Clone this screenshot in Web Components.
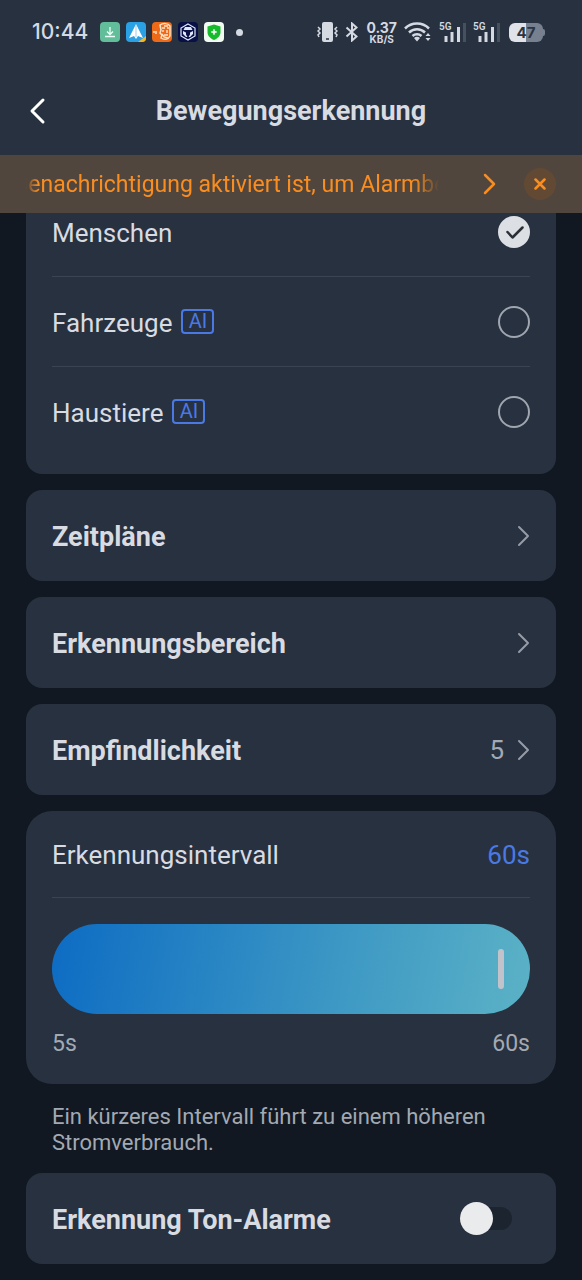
<!DOCTYPE html>
<html lang="de">
<head>
<meta charset="utf-8">
<meta name="viewport" content="width=device-width, initial-scale=1">
<title>Bewegungserkennung</title>
<style>
  html { background: #111822; }
  body { margin: 0; background: #111822; color: #d8dbe1; font-family: Roboto, "Liberation Sans", sans-serif; font-size: 26px; line-height: 32px;
    --card: #273140; --line: #3a4452; --muted: #a3a9b2; --blue: #4b79e4; --orange: #f98d20; }
  header { position: relative; z-index: 1; }
  main { display: flex; flex-direction: column; gap: 16px; padding: 0 26px 16px; margin-top: -26px; }
</style>
</head>
<body>
<header>
  <status-bar></status-bar>
  <title-bar>Bewegungserkennung</title-bar>
  <alert-banner>Benachrichtigung aktiviert ist, um Alarmbenachrichtigungen zu erhalten</alert-banner>
</header>
<main>
  <option-card>
    <check-row checked>Menschen</check-row>
    <check-row ai>Fahrzeuge</check-row>
    <check-row ai>Haustiere</check-row>
  </option-card>
  <link-card>Zeitpläne</link-card>
  <link-card>Erkennungsbereich</link-card>
  <link-card value="5">Empfindlichkeit</link-card>
  <interval-card>Erkennungsintervall</interval-card>
  <hint-text>Ein kürzeres Intervall führt zu einem höheren Stromverbrauch.</hint-text>
  <toggle-card>Erkennung Ton-Alarme</toggle-card>
</main>
<script>
const define = (name, html, setup) => customElements.define(name, class extends HTMLElement {
  constructor() {
    super();
    this.attachShadow({ mode: 'open' }).innerHTML = '<style>*{box-sizing:border-box}button,input{font:inherit;margin:0}button{border:0;padding:0;background:none;color:inherit;display:grid;place-items:center}svg{display:block;flex:none}</style>' + html;
  }
  connectedCallback() { if (setup) setup(this, this.shadowRoot); }
});

define('status-bar', `
<style>
  :host { display: flex; justify-content: space-between; align-items: center; height: 64px; padding: 0 37px 0 32px; background: var(--card); color: #d5d9e2; }
  .left, .right { display: flex; align-items: center; }
  .left { gap: 6px; }
  .right { gap: 7px; }
  time { font: 500 21px/24px Inter, sans-serif; margin-right: 6px; }
  .dot { width: 7px; height: 7px; border-radius: 50%; background: #d5d9e2; margin-left: 6px; }
  .rate { display: grid; justify-items: center; font: 700 14px/13px Inter, sans-serif; }
  .rate small { font-size: 10px; line-height: 10px; }
  .cell { display: grid; grid-template-columns: 13px 14px; align-items: start; }
  .cell span { font: 600 10px/10px Roboto, sans-serif; grid-area: 1/1; }
  .cell svg { grid-area: 1/1/2/3; }
  .battery { display: grid; place-items: center; position: relative; width: 34px; height: 19px; border-radius: 6px; background: linear-gradient(90deg, #dfe2e8 50%, #77808e 50%); font: 700 15px/19px Inter, sans-serif; color: #2b3442; margin: 0 2px; }
  .battery::after { content: ""; position: absolute; left: 100%; top: 6px; width: 2px; height: 7px; border-radius: 0 2px 2px 0; background: #77808e; }
</style>
<div class="left">
  <time>10:44</time>
  <svg width="20" height="20" viewBox="0 0 20 20"><rect width="20" height="20" rx="4" fill="#62bd9a"/><path d="M10 5v7M7 9.500l3 3 3-3M5 14.500h10" fill="none" stroke="#edfff8" stroke-width="1.300"/></svg>
  <svg width="20" height="20" viewBox="0 0 20 20"><rect width="20" height="20" rx="4" fill="#2ba1e5"/><path d="M12 20l8-6v2a4 4 0 0 1-4 4z" fill="#f3b52a"/><path d="M10 2L3 16l5-2 2 3 2-3 5 2z" fill="#fff"/><path d="M10 3v12" stroke="#9fcde9"/></svg>
  <svg width="20" height="20" viewBox="0 0 20 20"><rect width="20" height="20" rx="4" fill="#ee6a16"/><path d="M1 10h2m1-1v3M8 3c3-2 8-2 10 1v10c-2 4-6 4-9 2l1-3-2-2 1-3z" fill="none" stroke="#ffe3cb" stroke-width="1.500"/><path d="M10 6h3m2 0h2M11 8v2m4-2v3M12 13h4M12 4h4M10 12l2 3 4 1" stroke="#ffe3cb" stroke-width="1.400" fill="none"/></svg>
  <svg width="20" height="20" viewBox="0 0 20 20"><rect width="20" height="20" rx="4" fill="#081046"/><path d="M10 2l7 4v8l-7 4-7-4V6z" fill="none" stroke="#e0e6fb" stroke-width="1.200"/><path d="M7 5h6l1.500 3h-9zM5 9l3 1.500v2L9.500 15H8l-3-3zM15 9l-3 1.500v2L10.500 15H12l3-3z" fill="#e0e6fb"/></svg>
  <svg width="20" height="20" viewBox="0 0 20 20"><rect width="20" height="20" rx="4" fill="#f2faf2"/><path d="M10 2.500l6.500 2V10c0 4-3 6.500-6.500 8-3.500-1.500-6.500-4-6.500-8V4.500z" fill="#16bb2b"/><path d="M10 7l.8 2.200L13 10l-2.200.8L10 13l-.8-2.200L7 10l2.200-.8z" fill="#fff" stroke="#fff" stroke-width=".5"/></svg>
  <span class="dot"></span>
</div>
<div class="right">
  <svg width="21" height="20" viewBox="0 0 21 20" fill="none" stroke="#d5d9e2" stroke-width="1.500"><rect x="5" width="11" height="20" rx="2" fill="#d5d9e2" stroke="none"/><path d="M9 17h3" stroke="#273140"/><path d="M1 5l2 2-2 2 2 2-2 2 1 2M20 5l-2 2 2 2-2 2 2 2-1 2"/></svg>
  <svg width="14" height="20" viewBox="0 0 14 20" fill="none" stroke="#d5d9e2" stroke-width="2"><path d="M1.500 5.500l10 9L7 18.500v-17l4.500 4-10 9"/></svg>
  <span class="rate"><span>0.37</span><small>KB/S</small></span>
  <svg width="28" height="20" viewBox="0 0 28 20" fill="none" stroke="#d5d9e2" stroke-width="2.500"><path d="M1 6.500a17 17 0 0 1 24 0M5 10.500a11.500 11.500 0 0 1 16 0M8.500 14a6.500 6.500 0 0 1 9 0"/><path d="M10 16a4.500 4.500 0 0 1 6 0l-3 3.500z" fill="#d5d9e2" stroke="none"/><path d="M21.500 14l2.500-3 2.500 3zM21.500 16l2.500 3 2.500-3z" fill="#d5d9e2" stroke="none"/></svg>
  <span class="cell"><span>5G</span><svg width="27" height="20" viewBox="0 0 27 20" stroke="#d5d9e2" stroke-width="3"><path d="M7 20v-6M13 20V10M19.500 20V5"/><path d="M25.500 20V1" stroke="#465160"/></svg></span>
  <span class="cell"><span>5G</span><svg width="27" height="20" viewBox="0 0 27 20" stroke="#d5d9e2" stroke-width="3"><path d="M7 20v-6M13 20V10M19.500 20V5"/><path d="M25.500 20V1" stroke="#465160"/></svg></span>
  <span class="battery">47</span>
</div>`);

define('title-bar', `
<style>
  :host { box-sizing: border-box; display: grid; grid-template-columns: 24px 1fr 24px; align-items: center; height: 91px; padding: 2px 26px 0; background: var(--card); }
  h1 { margin: 0; text-align: center; font-size: 27px; line-height: 32px; font-weight: 700; }
</style>
<button aria-label="Zurück"><svg width="24" height="28" viewBox="0 0 24 28" fill="none" stroke="#fff" stroke-width="3" stroke-linecap="round" stroke-linejoin="round"><path d="M17 3L6 14l11 11"/></svg></button>
<h1><slot></slot></h1>`);

define('alert-banner', `
<style>
  :host { display: flex; align-items: center; height: 58px; padding: 0 26px; background: #50463d; color: var(--orange); }
  p { flex: 1; margin: 0; padding-top: 2px; display: flex; justify-content: flex-start; overflow: hidden; white-space: nowrap; font-size: 23px; line-height: 32px; -webkit-mask: linear-gradient(90deg, transparent, #000 12px, #000 calc(100% - 24px), transparent); mask: linear-gradient(90deg, transparent, #000 12px, #000 calc(100% - 24px), transparent); }
  p span { margin-left: -12px; }
  .go { width: 24px; height: 32px; margin: 0 23px 0 38px; }
  .close { width: 32px; height: 32px; border-radius: 50%; background: #624934; }
</style>
<p><span><slot></slot></span></p>
<button class="go" aria-label="Öffnen"><svg width="24" height="24" viewBox="0 0 24 24" fill="none" stroke="#f98d20" stroke-width="2.500" stroke-linecap="round" stroke-linejoin="round"><path d="M8 3l9 9-9 9"/></svg></button>
<button class="close" aria-label="Schließen"><svg width="12" height="12" viewBox="0 0 12 12" stroke="#f98d20" stroke-width="2.500" stroke-linecap="round"><path d="M1.500 1.500l9 9M10.500 1.500l-9 9"/></svg></button>`);

define('option-card', `
<style>:host { display: block; padding-bottom: 17px; border-radius: 16px; background: var(--card); }</style>
<slot></slot>`);

define('check-row', `
<style>
  :host { display: block; padding: 0 26px; }
  label { display: flex; align-items: center; height: 90px; border-bottom: 1px solid var(--line); }
  :host(:last-child) label { border-bottom-color: transparent; }
  .name { padding-top: 3px; }
  .tag { display: none; width: 33px; height: 25px; margin-left: 9px; border: 2px solid var(--blue); border-radius: 4px; color: var(--blue); font-size: 20px; line-height: 21px; text-align: center; }
  :host([ai]) .tag { display: block; }
  .box { display: grid; margin-left: auto; }
  input { appearance: none; grid-area: 1/1; width: 32px; height: 32px; border: 2px solid #a0a6b0; border-radius: 50%; }
  input:checked { background: #dcdfe3; border-color: #dcdfe3; }
  svg { grid-area: 1/1; visibility: hidden; pointer-events: none; }
  input:checked + svg { visibility: visible; }
</style>
<label><span class="name"><slot></slot></span><span class="tag">AI</span><span class="box"><input type="checkbox"><svg width="32" height="32" viewBox="0 0 32 32" fill="none" stroke="#2b3037" stroke-width="2.500" stroke-linecap="round" stroke-linejoin="round"><path d="M9.500 16l5 5.500 10-10"/></svg></span></label>`,
(el, root) => { root.querySelector('input').checked = el.hasAttribute('checked'); });

define('link-card', `
<style>
  :host { display: block; }
  a { display: flex; align-items: center; height: 91px; padding: 0 26px; border-radius: 16px; background: var(--card); color: inherit; text-decoration: none; }
  b { flex: 1; font-size: 27px; font-weight: 700; padding-top: 2px; }
  span { color: var(--muted); margin-right: 12px; }
</style>
<a href="#"><b><slot></slot></b><span></span><svg width="14" height="24" viewBox="0 0 14 24" fill="none" stroke="#959ca7" stroke-width="2" stroke-linecap="round" stroke-linejoin="round"><path d="M3 3l9 9-9 9"/></svg></a>`,
(el, root) => { root.querySelector('span').textContent = el.getAttribute('value') || ''; });

define('interval-card', `
<style>
  :host { display: block; padding: 0 26px 24px; border-radius: 26px; background: var(--card); }
  .top { display: flex; justify-content: space-between; align-items: center; height: 87px; padding-top: 2px; border-bottom: 1px solid var(--line); }
  output { color: var(--blue); }
  input { appearance: none; display: block; width: 100%; height: 90px; margin: 26px 0 14px; padding: 0 26px; border-radius: 45px; background: linear-gradient(100deg, #0d6cc3, #3d98c4 60%, #5bb2c6); }
  input::-webkit-slider-thumb { appearance: none; width: 6px; height: 40px; border-radius: 3px; background: #c2c3ca; }
  .ends { display: flex; justify-content: space-between; color: var(--muted); font-size: 23px; line-height: 32px; }
</style>
<div class="top"><label for="range"><slot></slot></label><output for="range">60s</output></div>
<input id="range" type="range" min="5" max="60" value="60">
<div class="ends"><span>5s</span><span>60s</span></div>`,
(el, root) => { const r = root.querySelector('input'); r.oninput = () => { root.querySelector('output').textContent = r.value + 's'; }; });

define('hint-text', `
<style>:host { display: block; padding: 4px 26px 1px; color: var(--muted); font-size: 22px; line-height: 26px; }</style>
<slot></slot>`);

define('toggle-card', `
<style>
  :host { display: block; }
  label { display: flex; align-items: center; justify-content: space-between; height: 91px; padding: 0 44px 0 26px; border-radius: 16px; background: var(--card); font-size: 27px; font-weight: 700; }
  .name { padding-top: 2px; }
  input { appearance: none; position: relative; display: flex; align-items: center; width: 52px; height: 33px; }
  input::before { content: ""; position: absolute; inset: 5px 0; border-radius: 12px; background: #1c2430; }
  input::after { content: ""; position: relative; width: 33px; height: 33px; border-radius: 50%; background: #eaebec; }
  input:checked::before { background: var(--blue); }
  input:checked::after { margin-left: auto; }
</style>
<label><span class="name"><slot></slot></span><input type="checkbox" role="switch"></label>`);
</script>
</body>
</html>
